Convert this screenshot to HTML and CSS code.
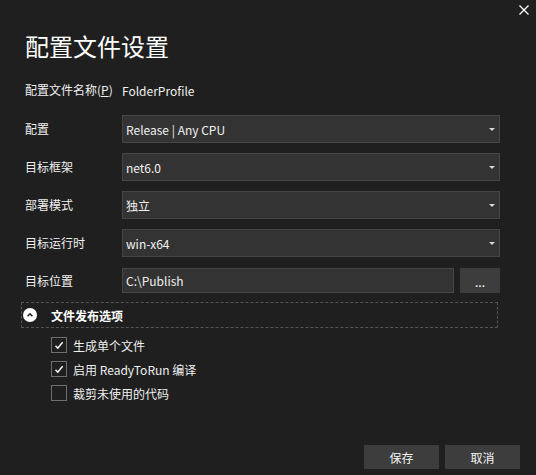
FILE: index.html
```html
<!DOCTYPE html>
<html lang="zh-CN">
<head>
<meta charset="utf-8">
<title>配置文件设置</title>
<link rel="stylesheet" href="styles.css">
</head>
<body>
<div class="dialog">
  <div class="topbar">
    <span class="close" aria-label="关闭">
      <svg width="10" height="10" viewBox="0 0 10 10"><path d="M0.5 0.5 L9.5 9.5 M9.5 0.5 L0.5 9.5" stroke="#ffffff" stroke-width="1.3" fill="none"/></svg>
    </span>
  </div>
  <h1 class="title">配置文件设置</h1>
  <div class="form">
    <div class="name-row">
      <span class="label">配置文件名称(<u>P</u>)</span>
      <span class="value">FolderProfile</span>
    </div>
    <div class="row">
      <span class="label">配置</span>
      <div class="combo"><span>Release | Any CPU</span><i class="arrow"></i></div>
    </div>
    <div class="row">
      <span class="label">目标框架</span>
      <div class="combo"><span>net6.0</span><i class="arrow"></i></div>
    </div>
    <div class="row">
      <span class="label">部署模式</span>
      <div class="combo"><span>独立</span><i class="arrow"></i></div>
    </div>
    <div class="row">
      <span class="label">目标运行时</span>
      <div class="combo"><span>win-x64</span><i class="arrow"></i></div>
    </div>
    <div class="row loc-row">
      <span class="label">目标位置</span>
      <div class="loc">
        <div class="textbox">C:\Publish</div>
        <div class="browse">...</div>
      </div>
    </div>
  </div>
  <div class="expander">
    <span class="exp-icon">
      <svg width="14" height="14" viewBox="0 0 14 14"><circle cx="7" cy="7" r="7" fill="#ffffff"/><path d="M4.6 8.2 L7 5.8 L9.4 8.2" stroke="#1f1f1f" stroke-width="1.6" fill="none"/></svg>
    </span>
    <span class="exp-text">文件发布选项</span>
  </div>
  <div class="checks">
    <label class="check"><span class="box checked"><svg width="10" height="9" viewBox="0 0 10 9"><path d="M1.5 4.8 L3.8 7.2 L8.6 1.2" stroke="#ffffff" stroke-width="1.4" fill="none"/></svg></span>生成单个文件</label>
    <label class="check"><span class="box checked"><svg width="10" height="9" viewBox="0 0 10 9"><path d="M1.5 4.8 L3.8 7.2 L8.6 1.2" stroke="#ffffff" stroke-width="1.4" fill="none"/></svg></span>启用 ReadyToRun 编译</label>
    <label class="check"><span class="box"></span>裁剪未使用的代码</label>
  </div>
  <div class="footer">
    <div class="btn">保存</div>
    <div class="btn">取消</div>
  </div>
</div>
</body>
</html>
```
FILE: styles.css
```css
html, body {
  margin: 0;
  padding: 0;
  background: #1f1f1f;
}
body {
  width: 536px;
  height: 475px;
  overflow: hidden;
  font-family: "Noto Sans CJK SC", "Noto Sans", sans-serif;
  font-size: 12px;
  color: #f0f0f0;
}
.dialog {
  display: flex;
  flex-direction: column;
}
.topbar {
  display: flex;
  justify-content: flex-end;
  padding: 5px 7px 0 0;
  height: 10px;
}
.close {
  display: block;
  width: 10px;
  height: 10px;
}
.close svg { display: block; }
.title {
  margin: 19px 0 0 25px;
  font-size: 24px;
  line-height: 24px;
  font-weight: normal;
  color: #ffffff;
}
.form {
  display: flex;
  flex-direction: column;
  gap: 10px;
  padding-left: 25px;
  margin-top: 22px;
}
.name-row {
  display: grid;
  grid-template-columns: 97px auto;
  align-items: center;
  height: 20px;
  margin-bottom: 5px;
}
.name-row u { text-decoration: underline; }
.row {
  display: grid;
  grid-template-columns: 97px 378px;
  align-items: center;
  height: 28px;
}
.loc-row {
  height: 25px;
  margin-top: 1px;
}
.label {
  white-space: nowrap;
  line-height: 16px;
}
.combo {
  box-sizing: border-box;
  height: 28px;
  background: #333333;
  border: 1px solid #454545;
  display: flex;
  align-items: center;
  justify-content: space-between;
  padding: 0 3px 0 3px;
  color: #f0f0f0;
}
.arrow {
  display: block;
  width: 0;
  height: 0;
  border-left: 3px solid transparent;
  border-right: 3px solid transparent;
  border-top: 3px solid #d8d8d8;
  margin-right: 1px;
  margin-top: 1px;
}
.loc {
  display: flex;
  gap: 6px;
  height: 25px;
}
.textbox {
  box-sizing: border-box;
  width: 332px;
  height: 25px;
  background: #333333;
  border: 1px solid #454545;
  display: flex;
  align-items: center;
  padding-left: 3px;
}
.browse {
  box-sizing: border-box;
  width: 40px;
  height: 25px;
  background: #3d3d3d;
  display: flex;
  align-items: center;
  justify-content: center;
  padding-top: 2px;
  font-weight: normal;
  color: #ffffff;
}
.expander {
  box-sizing: border-box;
  margin: 9px 0 0 21px;
  width: 477px;
  height: 26px;
  border: 1px dashed #555555;
  display: flex;
  align-items: center;
  padding-left: 0;
}
.exp-icon {
  display: block;
  width: 14px;
  height: 14px;
  margin-left: 1px;
}
.exp-icon svg { display: block; }
.exp-text {
  margin-left: 14px;
  font-weight: bold;
  color: #ffffff;
}
.checks {
  display: flex;
  flex-direction: column;
  margin: 5px 0 0 51px;
}
.check {
  display: flex;
  align-items: center;
  height: 24px;
  gap: 6px;
}
.box {
  box-sizing: border-box;
  width: 16px;
  height: 16px;
  border: 1px solid #6f6f6f;
  display: flex;
  align-items: center;
  justify-content: center;
}
.box svg { display: block; }
.footer {
  display: flex;
  justify-content: flex-end;
  gap: 6px;
  padding-right: 16px;
  margin-top: 40px;
}
.btn {
  width: 75px;
  height: 24px;
  background: #3d3d3d;
  display: flex;
  align-items: center;
  justify-content: center;
  color: #f4f4f4;
}
```
